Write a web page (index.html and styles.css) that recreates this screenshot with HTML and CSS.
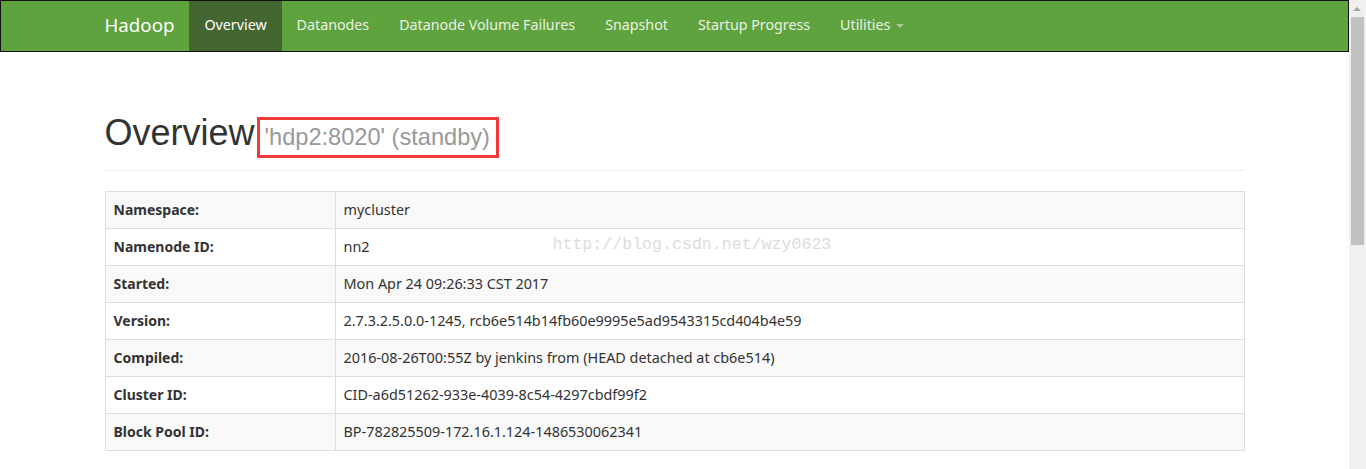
FILE: index.html
```html
<!DOCTYPE html>
<html lang="en">
<head>
    <meta charset="UTF-8">
    <title>Namenode information</title>
    <link rel="stylesheet" href="styles.css">
</head>
<body>
    <div class="page">
        <header class="navbar">
            <div class="container nav-inner">
                <a class="brand" href="#">Hadoop</a>
                <ul class="nav">
                    <li class="active"><a href="#">Overview</a></li>
                    <li><a href="#">Datanodes</a></li>
                    <li><a href="#">Datanode Volume Failures</a></li>
                    <li><a href="#">Snapshot</a></li>
                    <li><a href="#">Startup Progress</a></li>
                    <li><a href="#">Utilities <span class="caret"></span></a></li>
                </ul>
            </div>
        </header>

        <main class="container content">
            <div class="page-header">
                <h1>Overview <small>'hdp2:8020' (standby)</small></h1>
            </div>

            <div class="table-wrap">
                <table class="info">
                    <tr><th>Namespace:</th><td>mycluster</td></tr>
                    <tr><th>Namenode ID:</th><td>nn2</td></tr>
                    <tr><th>Started:</th><td>Mon Apr 24 09:26:33 CST 2017</td></tr>
                    <tr><th>Version:</th><td>2.7.3.2.5.0.0-1245, rcb6e514b14fb60e9995e5ad9543315cd404b4e59</td></tr>
                    <tr><th>Compiled:</th><td>2016-08-26T00:55Z by jenkins from (HEAD detached at cb6e514)</td></tr>
                    <tr><th>Cluster ID:</th><td>CID-a6d51262-933e-4039-8c54-4297cbdf99f2</td></tr>
                    <tr><th>Block Pool ID:</th><td>BP-782825509-172.16.1.124-1486530062341</td></tr>
                </table>
                <span class="watermark">http://blog.csdn.net/wzy0623</span>
            </div>
        </main>
    </div>

    <div class="scrollbar">
        <span class="arrow"></span>
        <span class="thumb"></span>
    </div>
</body>
</html>
```

FILE: styles.css
```css
html, body {
    margin: 0;
    height: 100%;
    overflow: hidden;
}
body {
    background: #fff;
    color: #333;
    font-family: "Noto Sans", "Open Sans", sans-serif;
    font-size: 14px;
    line-height: 20px;
}
.page {
    margin-right: 17px;
}
.container {
    width: 1170px;
    margin: 0 auto;
    padding: 0 15px;
    box-sizing: border-box;
}

/* navbar */
.navbar {
    background-color: #5fa33e;
    border: 1px solid #111;
    height: 50px;
}
.nav-inner {
    display: flex;
    height: 50px;
}
.brand {
    margin-left: -15px;
    padding: 0 15px 2px;
    font-size: 18.7px;
    line-height: 48px;
    color: #fff;
    text-decoration: none;
}
.nav {
    display: flex;
    list-style: none;
    margin: 0;
    padding: 0;
}
.nav a {
    display: block;
    padding: 0 15px 3px;
    font-size: 14.25px;
    line-height: 47px;
    color: #eaf0e4;
    text-decoration: none;
}
.nav .active a {
    background-color: #446630;
    color: #fff;
}
.caret {
    display: inline-block;
    width: 0;
    height: 0;
    margin-left: 2px;
    vertical-align: middle;
    border-top: 4px solid #a9c99a;
    border-left: 4px solid transparent;
    border-right: 4px solid transparent;
}

/* heading */
.content {
    padding-top: 61px;
}
.page-header {
    border-bottom: 1px solid #eee;
    padding-bottom: 12px;
    margin-bottom: 20px;
}
h1 {
    margin: 0;
    font-family: "Liberation Sans", Arial, sans-serif;
    font-size: 36px;
    font-weight: 500;
    line-height: 40px;
    color: #333;
}
h1 small {
    display: inline-block;
    margin-left: -8px;
    padding: 0 6px 0 5px;
    border: 3px solid #f33a3a;
    font-size: 23.6px;
    line-height: 35px;
    color: #999;
}

/* table */
.table-wrap {
    position: relative;
}
.info {
    width: 100%;
    border-collapse: collapse;
    border: 1px solid #ddd;
}
.info th, .info td {
    padding: 8px;
    border: 1px solid #ddd;
    text-align: left;
    vertical-align: top;
}
.info th {
    width: 213px;
    font-weight: 700;
}
.info td {
    font-size: 14.4px;
}
.info tr:nth-child(odd) {
    background-color: #f9f9f9;
}
.watermark {
    position: absolute;
    left: 448px;
    top: 44px;
    font-family: "Liberation Mono", monospace;
    font-size: 16.6px;
    color: #dcdcdc;
}

/* fake window scrollbar */
.scrollbar {
    position: fixed;
    top: 0;
    right: 0;
    width: 17px;
    height: 100%;
    background: #f0f0f0;
}
.arrow {
    position: absolute;
    top: 7px;
    left: 4px;
    border-bottom: 4px solid #a3a3a3;
    border-left: 4px solid transparent;
    border-right: 4px solid transparent;
}
.thumb {
    position: absolute;
    top: 17px;
    left: 2px;
    width: 13px;
    height: 228px;
    background: #c1c1c1;
}
```
